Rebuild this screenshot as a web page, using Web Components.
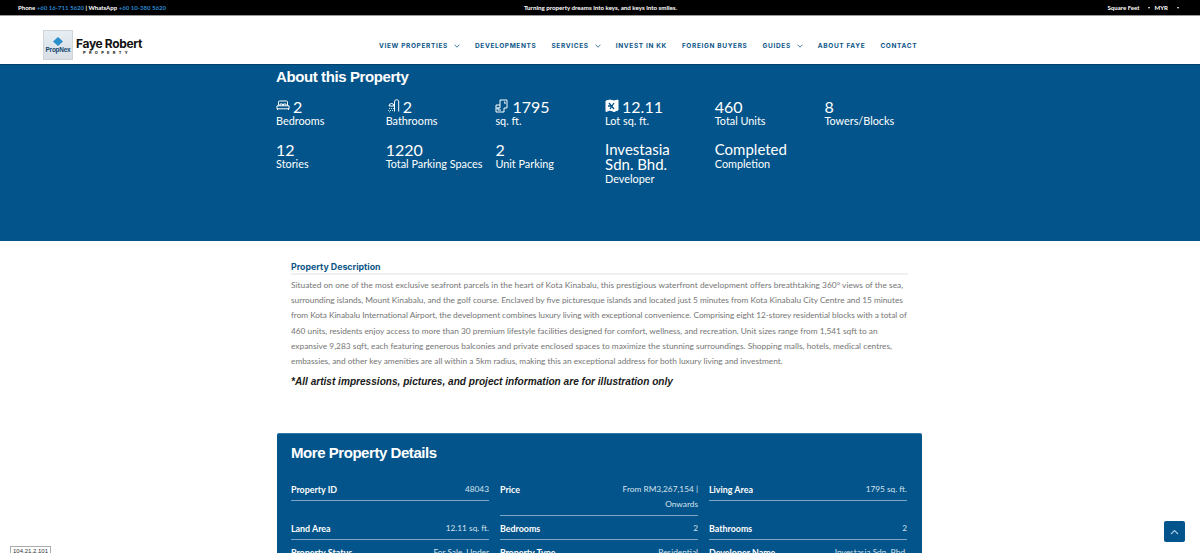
<!DOCTYPE html>
<html lang="en"><head><meta charset="utf-8"><title>About this Property</title>
<style>
html,body{margin:0;padding:0;height:553px;overflow:hidden;background:#fff;font-family:"Lato","Liberation Sans",sans-serif}
</style></head><body>
<fr-topbar></fr-topbar>
<fr-header></fr-header>
<fr-about></fr-about>
<fr-desc></fr-desc>
<fr-details></fr-details>
<fr-totop></fr-totop>
<fr-ip>104.21.2.101</fr-ip>
<script>
function def(name,css,html){
  customElements.define(name,class extends HTMLElement{
    connectedCallback(){ if(this.shadowRoot) return;
      const s=this.attachShadow({mode:"open"});
      s.innerHTML="<style>"+css+"</style>"+(typeof html==="function"?html(this):html);
    }
  });
}
def("fr-topbar",`
:host{display:grid;grid-template-columns:1fr auto 1fr;align-items:center;height:15px;background:#000;color:#fff;border-bottom:1px solid #9a9a9a;font:700 6.050px/15px "Lato",sans-serif;padding:0 17px 0 18px}
a{color:#2a87cf;text-decoration:none}
.r{justify-self:end;display:flex;gap:4px;align-items:center;padding-right:4px}
.c{font-size:6.200px}
i{display:inline-block;width:0;height:0;border:1.500px solid transparent;border-top:2px solid #fff;border-bottom:0;margin-left:9px;vertical-align:middle}
`,`<div>Phone <a>+60 16-711 5620</a> | WhatsApp <a>+60 10-380 5620</a></div>
<div class="c">Turning property dreams into keys, and keys into smiles.</div>
<div class="r"><span>Square Feet<i></i></span><span>MYR<i></i></span></div>`);
def("fr-header",`
:host{display:flex;align-items:center;height:48px;background:#fff;padding:10px 0 0 43px;box-sizing:border-box}
.mark{width:30px;height:30px;background:linear-gradient(#e6edf3,#d9dfe4);border:1px solid #cfd4d8;box-sizing:border-box;display:flex;flex-direction:column;align-items:center;justify-content:center;color:#12466f;font:700 6.400px/8px "Liberation Sans",sans-serif;letter-spacing:-.2px}
.mark svg{width:10px;height:9px;display:block}
.brand{margin-left:3px;color:#111;width:70px;padding-top:2px}
.n{font:700 12px/13px "Inter",sans-serif;letter-spacing:-.35px;white-space:nowrap}
.p{font:700 4px/6px "Inter",sans-serif;letter-spacing:3.300px;margin-left:7px;white-space:nowrap}
nav{display:flex;margin-left:233px;gap:15px;color:#0e5688;font:700 6.500px/1 "Inter",sans-serif;letter-spacing:.65px;white-space:nowrap;margin-top:3px}
nav span{display:flex;align-items:center}
nav svg{width:6px;height:4px;margin:0 0 2px 6px}
`,()=>{const ch=`<svg viewBox="0 0 6 4"><path d="M.5.700 3 3.200 5.500.700" fill="none" stroke="#0e5688" stroke-width=".8"/></svg>`;
return `<div class="mark"><svg viewBox="0 0 10 9"><path d="M5 0 10 4.500 5 9 0 4.500Z" fill="#2a8fc9"/></svg><span>PropNex</span></div>
<div class="brand"><div class="n">Faye Robert</div><div class="p">PROPERTY</div></div>
<nav><span>VIEW PROPERTIES${ch}</span><span>DEVELOPMENTS</span><span>SERVICES${ch}</span><span>INVEST IN KK</span><span>FOREIGN BUYERS</span><span>GUIDES${ch}</span><span>ABOUT FAYE</span><span>CONTACT</span></nav>`});
def("fr-stat",`
:host{display:block;color:#fff}
.v{display:flex;align-items:center;gap:3px;font:400 16px/15px "Lato",sans-serif}
.v.t{font-size:15px}
.l{font:400 10.850px/13px "Lato",sans-serif}
svg{width:14px;height:14px;flex:none;fill:none;stroke:#fff;stroke-width:1;margin-top:-2px}
`,h=>{const icons={
bed:`<path d="M2.500 6.500V3a1 1 0 0 1 1-1h7a1 1 0 0 1 1 1v3.500M4 6.500V5h2.500v1.500M7.500 6.500V5H10v1.500"/><path d="M1 6.800h12v3H1zM1.500 9.800V11M12.500 9.800V11"/>`,
bath:`<path d="M8.500 12.500V3a2.200 2.200 0 0 1 4.200-1v10.500"/><path d="M3 7a2.500 2.500 0 0 1 5 0z"/><path d="M3.500 9v.8M5.500 9v.8M7.500 9v.8M2.500 11v.8M4.500 11v.8M6.500 11v.8M3.500 12.500v.8"/>`,
area:`<path d="M5 1h7v8H9v4H1V6h4zM5 6v3H1M9 3h1v2M3 8.500v2.500h3"/>`,
map:`<path d="M1 2l4-1 4 1 4-1v10l-4 1.500-4-1.500-4 1.500z" fill="#fff"/><path d="M4 4l5 6M9 4l-4 6M3 7h3" stroke="#03548a" stroke-width="1.300"/>`};
const ic=h.getAttribute("icon"),t=h.hasAttribute("text");
return `<div class="v${t?" t":""}">${ic?`<svg viewBox="0 0 14 14">${icons[ic]}</svg>`:""}<span><slot></slot></span></div><div class="l">${h.getAttribute("label")}</div>`});
def("fr-about",`
:host{display:block;height:177px;background:#03548a;color:#fff;padding:0 0 0 276px;box-sizing:border-box;border-top:1px solid #023f6a}
h2{margin:0;font:700 15px/24px "Liberation Sans",sans-serif;letter-spacing:-.4px}
.g{display:grid;grid-template-columns:repeat(6,109.700px);row-gap:15px;margin-top:10px;width:659px}
`,`<h2>About this Property</h2><div class="g">
<fr-stat icon="bed" label="Bedrooms">2</fr-stat>
<fr-stat icon="bath" label="Bathrooms">2</fr-stat>
<fr-stat icon="area" label="sq. ft.">1795</fr-stat>
<fr-stat icon="map" label="Lot sq. ft.">12.11</fr-stat>
<fr-stat label="Total Units">460</fr-stat>
<fr-stat label="Towers/Blocks">8</fr-stat>
<fr-stat label="Stories">12</fr-stat>
<fr-stat label="Total Parking Spaces">1220</fr-stat>
<fr-stat label="Unit Parking">2</fr-stat>
<fr-stat text label="Developer">Investasia<br>Sdn. Bhd.</fr-stat>
<fr-stat text label="Completion">Completed</fr-stat>
</div>`);
def("fr-desc",`
:host{display:block;margin:0 292px 0 291px;padding-top:20px;height:192px;box-sizing:border-box}
h3{margin:0;font:700 8.800px/12px "Inter",sans-serif;color:#0e5688;padding-bottom:0;border-bottom:2px solid #f0f0f0}
p{margin:3px 0 0;font:400 8.300px/15.200px "Lato",sans-serif;color:#757575;white-space:nowrap}
p span{display:block}
em{display:block;margin-top:5px;font:italic 700 10.100px/15px "Liberation Sans",sans-serif;color:#1a1a1a}
`,`<h3>Property Description</h3>
<p><span style="letter-spacing:.04px">Situated on one of the most exclusive seafront parcels in the heart of Kota Kinabalu, this prestigious waterfront development offers breathtaking 360° views of the sea,</span>
<span>surrounding islands, Mount Kinabalu, and the golf course. Enclaved by five picturesque islands and located just 5 minutes from Kota Kinabalu City Centre and 15 minutes</span>
<span style="letter-spacing:-.05px">from Kota Kinabalu International Airport, the development combines luxury living with exceptional convenience. Comprising eight 12-storey residential blocks with a total of</span>
<span>460 units, residents enjoy access to more than 30 premium lifestyle facilities designed for comfort, wellness, and recreation. Unit sizes range from 1,541 sqft to an</span>
<span style="letter-spacing:.025px">expansive 9,283 sqft, each featuring generous balconies and private enclosed spaces to maximize the stunning surroundings. Shopping malls, hotels, medical centres,</span>
<span>embassies, and other key amenities are all within a 5km radius, making this an exceptional address for both luxury living and investment.</span></p>
<em>*All artist impressions, pictures, and project information are for illustration only</em>`);
def("fr-row",`
:host{display:flex;justify-content:space-between;gap:10px;padding-bottom:2.500px;border-bottom:1.500px solid #7aa5c6;color:#fff;font:400 8.900px/15px "Lato",sans-serif}
b{font-weight:700;white-space:nowrap}
span{text-align:right;color:#d5e2ec;font-size:8.300px}
`,h=>`<b>${h.getAttribute("k")}</b><span><slot></slot></span>`);
def("fr-details",`
:host{display:block;margin-left:277px;width:645px;height:120px;overflow:hidden;background:#03548a;border-radius:2px 2px 0 0;border-top:1px solid #2f78ab;box-sizing:border-box;padding:7px 15px 0 14px;color:#fff}
h2{margin:0;font:700 15px/24px "Liberation Sans",sans-serif;letter-spacing:-.45px}
.g{display:grid;grid-template-columns:repeat(3,198px);column-gap:11px;row-gap:5.500px;align-items:start;margin-top:17px}
`,`<h2>More Property Details</h2><div class="g">
<fr-row k="Property ID">48043</fr-row><fr-row k="Price">From RM3,267,154 |<br>Onwards</fr-row><fr-row k="Living Area">1795 sq. ft.</fr-row>
<fr-row k="Land Area">12.11 sq. ft.</fr-row><fr-row k="Bedrooms">2</fr-row><fr-row k="Bathrooms">2</fr-row>
<fr-row k="Property Status">For Sale, Under</fr-row><fr-row k="Property Type">Residential</fr-row><fr-row k="Developer Name">Investasia Sdn. Bhd.</fr-row>
</div>`);
def("fr-totop",`
:host{position:fixed;left:1164px;top:521px;width:21px;height:21px;background:#03548a;border-radius:2px;display:flex;align-items:center;justify-content:center}
svg{width:9px;height:6px}
`,`<svg viewBox="0 0 9 6"><path d="M1 5 4.500 1.500 8 5" fill="none" stroke="#a9cbe4" stroke-width="1.200"/></svg>`);
def("fr-ip",`
:host{position:fixed;left:10px;top:546px;width:41px;height:12px;box-sizing:border-box;background:#fff;border:1px solid #aaa;color:#333;font:400 6px/9px "Liberation Sans",sans-serif;text-align:center}
`,`<slot></slot>`);
</script>
</body></html>
